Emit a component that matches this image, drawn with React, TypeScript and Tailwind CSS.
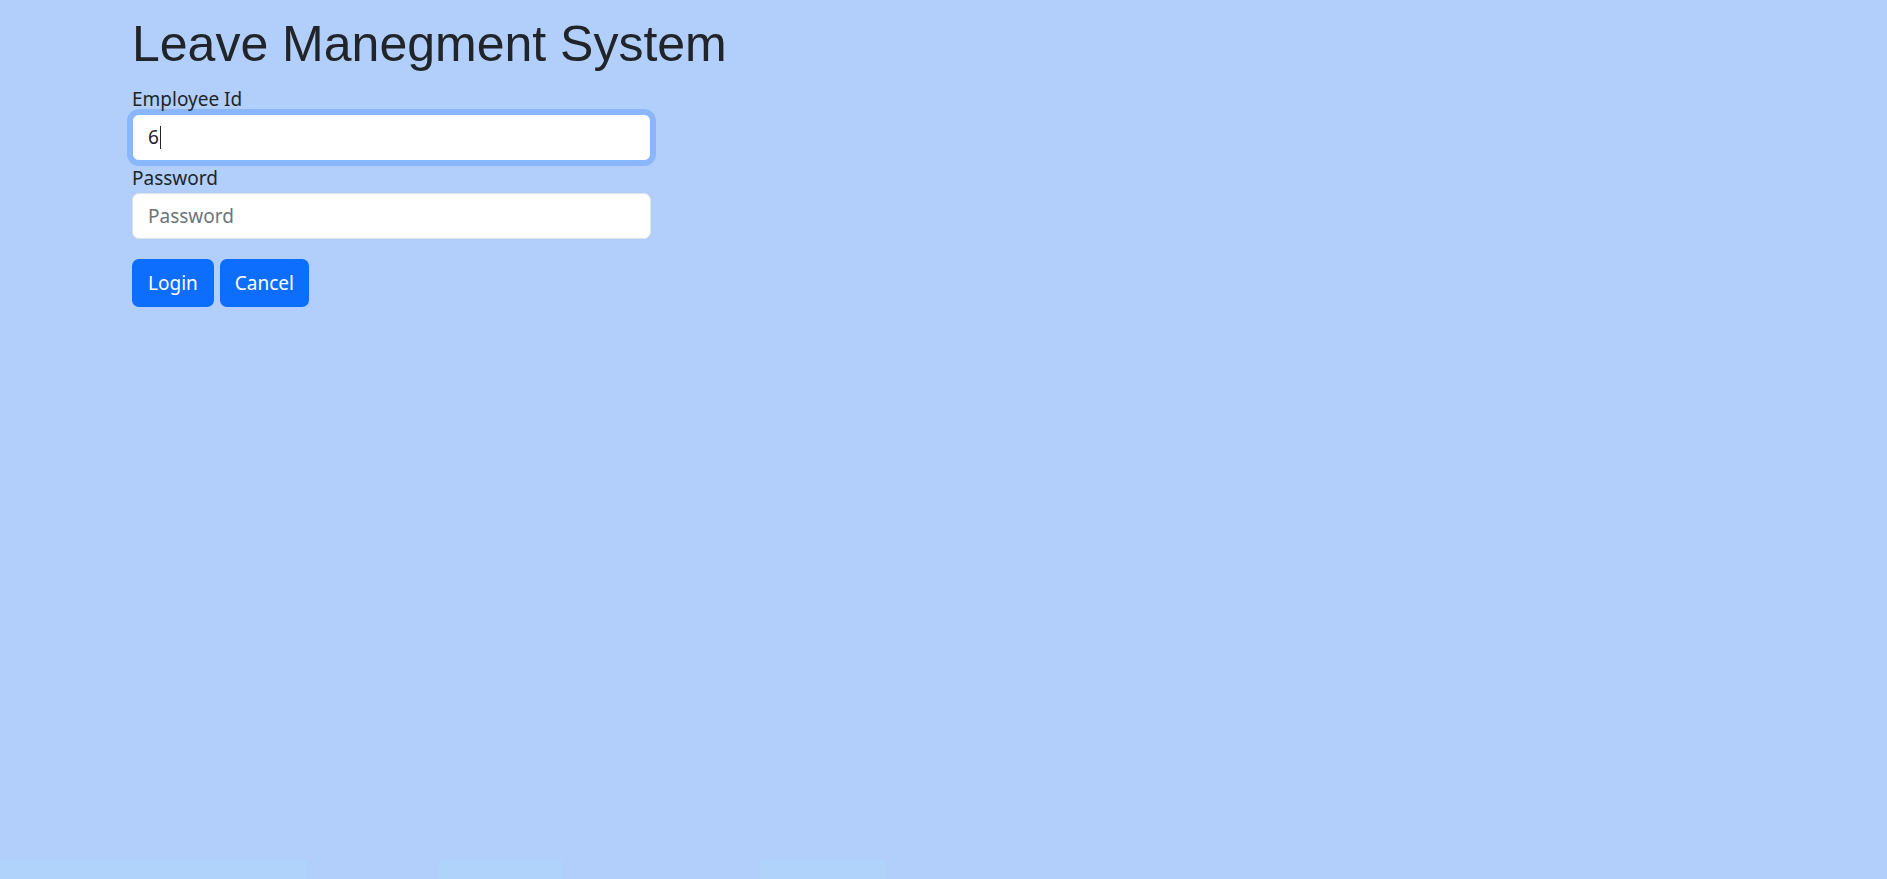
import React from "react";

const body = { fontFamily: '"Noto Sans", "Open Sans", sans-serif' };

export default function App() {
  return (
    <main className="min-h-screen h-[879px] bg-[#b2cffb] flex flex-col text-[#212529]" style={body}>
      <div className="flex-1 pl-[132px] pt-[14px]">
        <h1
          className="text-[50px] leading-[60px] mb-[10px] text-[#212529]"
          style={{ fontFamily: '"Liberation Sans", Arial, sans-serif' }}
        >
          Leave Manegment System
        </h1>

        <form className="w-[519px]" onSubmit={(e) => e.preventDefault()}>
          {/* Employee Id */}
          <label className="block text-[19px] leading-[30px]">Employee Id</label>
          <div className="h-[47px] rounded-[7px] bg-white border border-[#86b7fe] shadow-[0_0_0_5px_#8ab6fb] px-[15px] flex items-center text-[19px]">
            <span>6</span>
            <span className="ml-[1px] w-px h-[23px] bg-[#212529]" />
          </div>

          {/* Password */}
          <label className="block text-[19px] leading-[30px] mt-[2px]">Password</label>
          <div className="h-[46px] rounded-[7px] bg-white border border-[#dee2e6] px-[15px] flex items-center text-[19px] text-[#6c757d]">
            Password
          </div>

          <div className="flex gap-[6px] mt-[20px]">
            <button
              type="submit"
              className="h-[48px] px-[16px] rounded-[7px] bg-[#0d6efd] text-white text-[19px]"
            >
              Login
            </button>
            <button
              type="button"
              className="h-[48px] px-[15px] rounded-[7px] bg-[#0d6efd] text-white text-[19px]"
            >
              Cancel
            </button>
          </div>
        </form>
      </div>

      {/* faint background strip */}
      <div className="h-[19px] flex">
        <div className="w-[307px] bg-[#afd3fa]" />
        <div className="w-[132px]" />
        <div className="w-[123px] bg-[#afd3fa]" />
        <div className="w-[198px]" />
        <div className="w-[125px] bg-[#afd3fa]" />
      </div>
    </main>
  );
}
